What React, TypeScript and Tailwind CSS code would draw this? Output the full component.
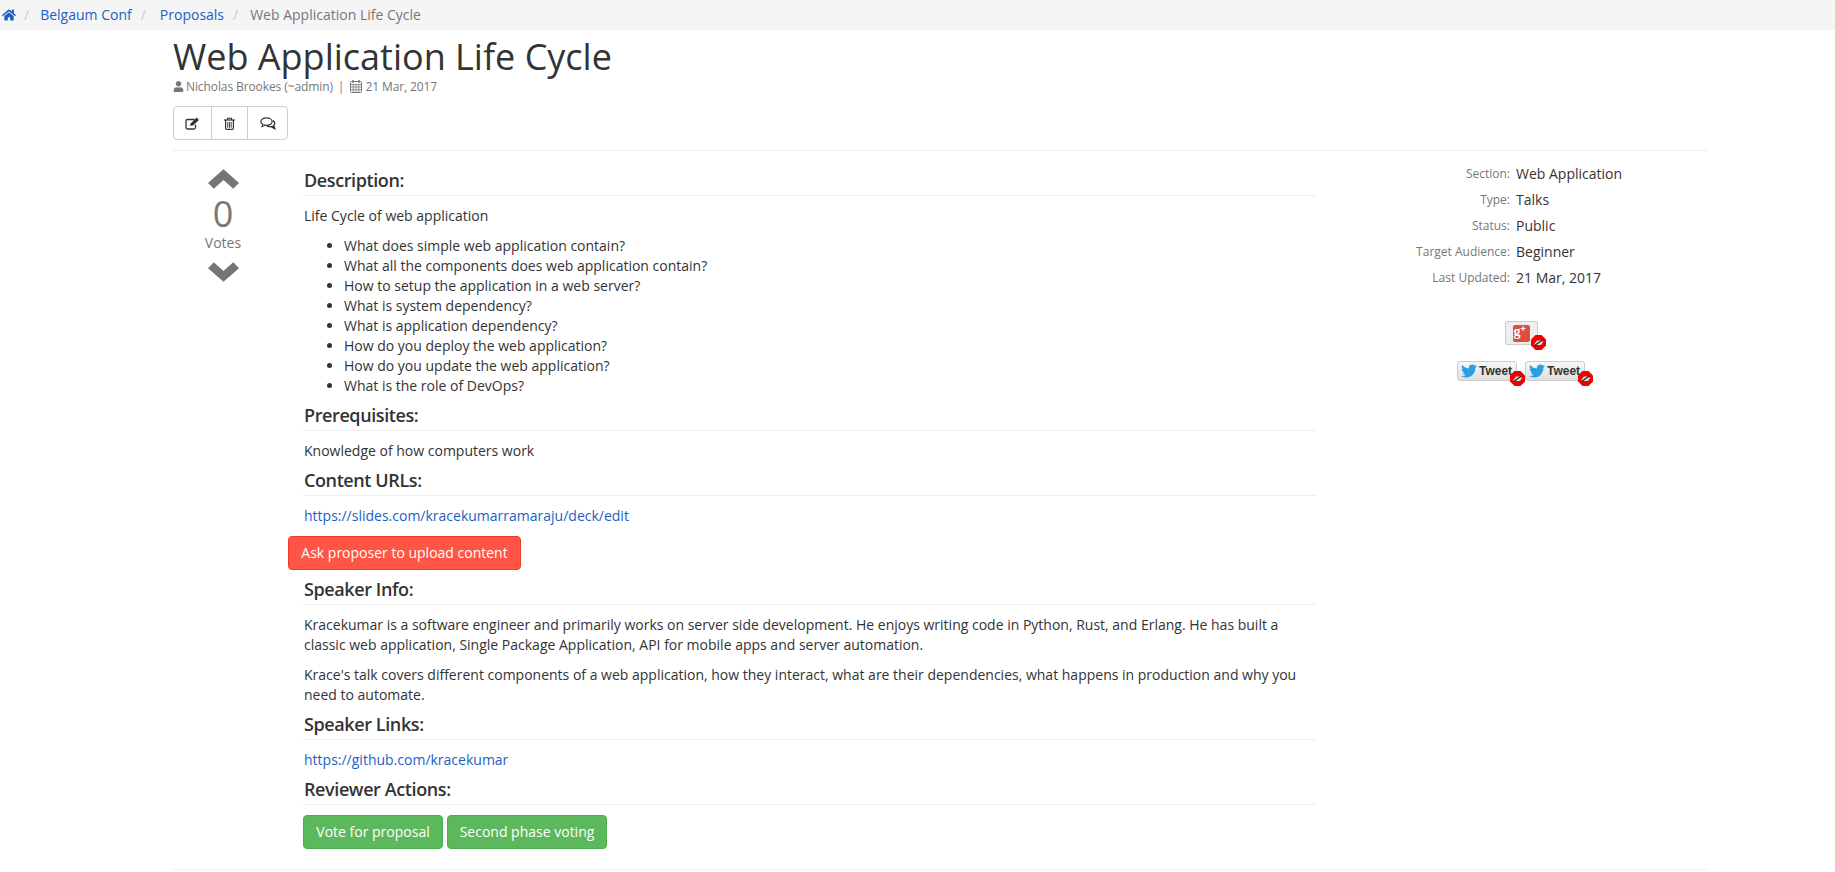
import React from 'react';
import { FaHome, FaUser, FaTwitter } from 'react-icons/fa';

const questions = [
  'What does simple web application contain?',
  'What all the components does web application contain?',
  'How to setup the application in a web server?',
  'What is system dependency?',
  'What is application dependency?',
  'How do you deploy the web application?',
  'How do you update the web application?',
  'What is the role of DevOps?',
];

const meta = [
  ['Section:', 'Web Application'],
  ['Type:', 'Talks'],
  ['Status:', 'Public'],
  ['Target Audience:', 'Beginner'],
  ['Last Updated:', '21 Mar, 2017'],
];

const Heading: React.FC<{ children: React.ReactNode }> = ({ children }) => (
  <h4 className="text-[18px] leading-[18px] font-semibold tracking-[-0.4px] text-[#333] border-b border-[#eee] pb-[6px] pl-[1px] mb-[10px]">{children}</h4>
);

const Calendar = () => (
  <svg viewBox="0 0 12 13" className="w-[12px] h-[13px]" fill="none" stroke="#777" strokeWidth="1">
    <rect x="0.5" y="1.5" width="11" height="11" rx="1" />
    <path d="M0.5 4.5H11.5M0.5 7H11.5M0.5 9.7H11.5M3.2 4.5V12.5M6 4.5V12.5M8.8 4.5V12.5" strokeWidth="0.8" />
    <path d="M3 0V3M9 0V3" strokeWidth="1.4" />
  </svg>
);

const EditIcon = () => (
  <svg viewBox="0 0 15 13" className="w-[15px] h-[13px]" fill="none" stroke="#333">
    <path d="M9.5 2.5H2.5C1.4 2.5 1 3 1 4V10.5C1 11.5 1.5 12 2.5 12H9C10 12 10.5 11.5 10.5 10.5V7.5" strokeWidth="1.3" />
    <path d="M5 8.8L5.6 6.4L11.6 0.6L14 2.9L8 8.6Z" fill="#333" stroke="none" />
  </svg>
);

const TrashIcon = () => (
  <svg viewBox="0 0 11 13" className="w-[11px] h-[13px]" fill="none" stroke="#333">
    <path d="M0 3H11" strokeWidth="1.2" />
    <path d="M3.5 3V1.2H7.5V3" strokeWidth="1.1" />
    <path d="M1.6 3V11.2C1.6 12 2 12.4 2.7 12.4H8.3C9 12.4 9.4 12 9.4 11.2V3" strokeWidth="1.2" />
    <path d="M3.8 5V10.8M5.5 5V10.8M7.2 5V10.8" strokeWidth="0.9" />
  </svg>
);

const CommentsIcon = () => (
  <svg viewBox="0 0 16 13" className="w-[16px] h-[13px]" fill="none" stroke="#333">
    <ellipse cx="6.5" cy="4.6" rx="5.7" ry="3.8" strokeWidth="1.2" />
    <path d="M3 7.6L1.6 10L5 8.3" strokeWidth="1" fill="#fff" />
    <path d="M13 3.6C15 5 15.4 7 13.6 8.6L14.8 11.6L11 9.6C9.6 9.8 8 9.6 7 8.9" strokeWidth="1.3" />
    <path d="M13.6 8.6L14.8 11.6L11 9.6Z" fill="#333" stroke="none" />
  </svg>
);

const ChevronUp = () => (
  <svg viewBox="0 0 32 20" className="w-[31px] h-[20px]" fill="#757575">
    <path d="M16 0L32 14L26 20L16 11L6 20L0 14Z" />
  </svg>
);

const ChevronDown = () => (
  <svg viewBox="0 0 32 20" className="w-[31px] h-[20px]" fill="#757575">
    <path d="M16 20L32 6L26 0L16 9L6 0L0 6Z" />
  </svg>
);

const BlockBadge = () => (
  <svg viewBox="0 0 15 15" className="absolute -right-[9px] -bottom-[6px] w-[15px] h-[15px]">
    <polygon points="4.5,0 10.5,0 15,4.5 15,10.5 10.5,15 4.5,15 0,10.5 0,4.5" fill="#f00000" />
    <path d="M3 9.5L6 5.5H11L12 7L10 10H4Z" fill="#e0e0e0" />
    <path d="M3.5 10.5L11.5 5" stroke="#222" strokeWidth="1.2" />
  </svg>
);

const TweetButton = () => (
  <span className="relative inline-flex items-center h-[20px] w-[60px] rounded-[3px] border border-[#ccc] bg-gradient-to-b from-[#f8f8f8] to-[#dedede] pl-[3px] font-['Liberation_Sans',sans-serif] text-[12px] font-bold text-[#333] gap-[2px]">
    <FaTwitter className="text-[#2b9fe3] text-[16px] shrink-0" />
    Tweet
    <BlockBadge />
  </span>
);

export default function App() {
  return (
    <div className="min-h-[872px] bg-white font-['Open_Sans',sans-serif] text-[14px] leading-[20px] text-[#333] overflow-hidden">
      <div className="h-[30px] bg-[#f5f5f5] flex items-center pl-[2px] text-[14px] text-[#777]">
        <FaHome className="text-[#1c5fc4] text-[14px] w-[14px]" />
        <span className="text-[#ccc] ml-[8px] mr-[11px]">/</span>
        <a className="text-[#1c5fc4]">Belgaum Conf</a>
        <span className="text-[#ccc] ml-[9px] mr-[14px]">/</span>
        <a className="text-[#1c5fc4]">Proposals</a>
        <span className="text-[#ccc] ml-[9px] mr-[12px]">/</span>
        <span>Web Application Life Cycle</span>
      </div>

      <div className="ml-[173px] w-[1534px]">
        <h1 className="text-[36px] leading-[40px] font-normal text-[#333] mt-[7px]">Web Application Life Cycle</h1>
        <div className="text-[12px] leading-[17px] text-[#777] flex items-center mt-[1px]">
          <FaUser className="text-[11px] mr-[2px]" />
          <span className="tracking-[-0.1px]">Nicholas Brookes (~admin)</span>
          <span className="ml-[5px] mr-[6px]">|</span>
          <Calendar />
          <span className="ml-[3px] tracking-[-0.1px]">21 Mar, 2017</span>
        </div>
        <div className="flex mt-[11px] w-fit border border-[#ccc] rounded-[4px] h-[34px] text-[#333]">
          <span className="w-[38px] flex items-center justify-center border-r border-[#ccc]"><EditIcon /></span>
          <span className="w-[36px] flex items-center justify-center border-r border-[#ccc]"><TrashIcon /></span>
          <span className="w-[39px] flex items-center justify-center"><CommentsIcon /></span>
        </div>
        <div className="border-t border-[#eee] mt-[10px]" />

        <div className="flex">
          <div className="w-[50px] ml-[25px] mt-[18px] flex flex-col items-center text-[#777] shrink-0">
            <ChevronUp />
            <div className="text-[36px] leading-[36px] mt-[7px]">0</div>
            <div className="text-[14px] leading-[20px] mt-[1px]">Votes</div>
            <div className="mt-[9px]"><ChevronDown /></div>
          </div>

          <div className="w-[1013px] ml-[55px] mt-[20px] shrink-0">
            <Heading>Description:</Heading>
            <p className="pl-[1px] mb-[10px]">Life Cycle of web application</p>
            <ul className="list-disc pl-[41px] mb-[10px]">
              {questions.map((q) => <li key={q}>{q}</li>)}
            </ul>
            <Heading>Prerequisites:</Heading>
            <p className="pl-[1px] mb-[10px]">Knowledge of how computers work</p>
            <Heading>Content URLs:</Heading>
            <p className="pl-[1px] mb-[10px]"><a className="text-[#1c5fc4]">https://slides.com/kracekumarramaraju/deck/edit</a></p>
            <button className="block -ml-[15px] w-[233px] h-[34px] bg-[#ff5544] border border-[#f23a28] rounded-[4px] text-white text-[14px] mb-[10px]">Ask proposer to upload content</button>
            <Heading>Speaker Info:</Heading>
            <p className="pl-[1px] pr-[2px] mb-[10px]">Kracekumar is a software engineer and primarily works on server side development. He enjoys writing code in Python, Rust, and Erlang. He has built a classic web application, Single Package Application, API for mobile apps and server automation.</p>
            <p className="pl-[1px] pr-[2px] mb-[10px]">Krace's talk covers different components of a web application, how they interact, what are their dependencies, what happens in production and why you need to automate.</p>
            <Heading>Speaker Links:</Heading>
            <p className="pl-[1px] mb-[10px]"><a className="text-[#1c5fc4]">https://github.com/kracekumar</a></p>
            <Heading>Reviewer Actions:</Heading>
            <div className="flex gap-[4px]">
              <button className="w-[140px] h-[34px] bg-[#5cb85c] border border-[#4cae4c] rounded-[4px] text-white">Vote for proposal</button>
              <button className="w-[160px] h-[34px] bg-[#5cb85c] border border-[#4cae4c] rounded-[4px] text-white">Second phase voting</button>
            </div>
          </div>

          <div className="ml-[18px] flex-1 mt-[13px]">
            <div className="grid grid-cols-[176px_1fr] gap-x-[6px] gap-y-[6px]">
              {meta.map(([label, value]) => (
                <React.Fragment key={label}>
                  <div className="text-right text-[12px] text-[#777] leading-[20px]">{label}</div>
                  <div className="leading-[20px]">{value}</div>
                </React.Fragment>
              ))}
            </div>
            <div className="flex justify-center mt-[33px] ml-[1px]">
              <span className="relative w-[33px] h-[24px] rounded-[2px] border border-[#ccc] bg-[#eee] flex items-center justify-center">
                <span className="flex w-[17px] h-[17px] rounded-[2px] bg-[#dc4e41] text-white font-bold pl-[1px]">
                  <span className="text-[14px] leading-[14px] font-['Liberation_Serif',serif]">g</span>
                  <span className="text-[9px] leading-[9px] font-['Liberation_Sans',sans-serif]">+</span>
                </span>
                <BlockBadge />
              </span>
            </div>
            <div className="flex justify-center gap-[8px] mt-[16px] ml-[1px]">
              <TweetButton />
              <TweetButton />
            </div>
          </div>
        </div>
        <div className="border-t border-[#eee] mt-[20px]" />
      </div>
    </div>
  );
}
